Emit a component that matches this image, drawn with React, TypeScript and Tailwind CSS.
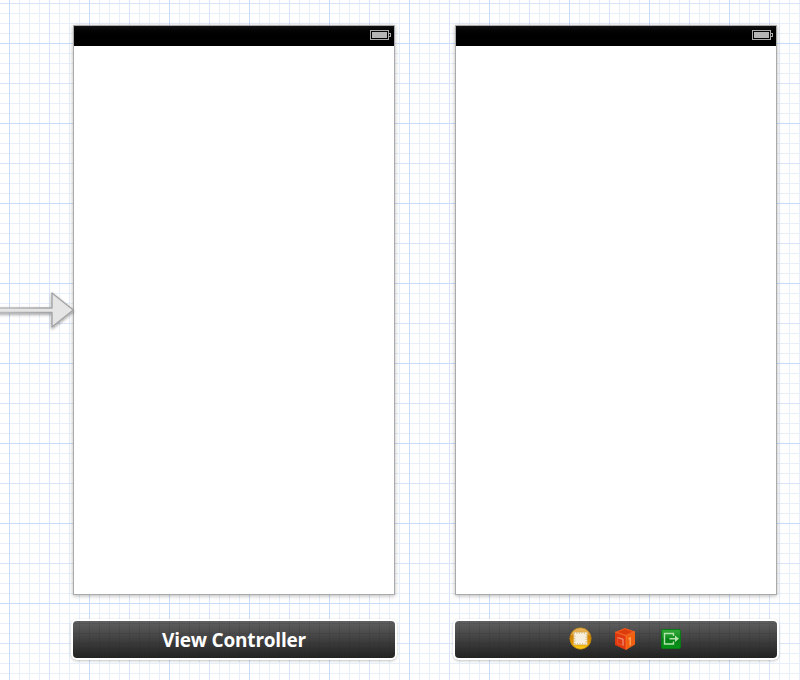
import type { ReactNode } from "react";

function Grid() {
  return (
    <svg className="absolute inset-0" width="800" height="680" shapeRendering="crispEdges" aria-hidden="true">
      <defs>
        <pattern id="grid" x="9" y="43" width="80" height="80" patternUnits="userSpaceOnUse">
          <path d="M10.5 0V80M20.5 0V80M30.5 0V80M50.5 0V80M60.5 0V80M70.5 0V80M0 10.5H80M0 20.5H80M0 30.5H80M0 50.5H80M0 60.5H80M0 70.5H80" stroke="#e7effa" />
          <path d="M40.5 0V80M0 40.5H80" stroke="#d8e5f8" />
          <path d="M.5 0V80M0 .5H80" stroke="#c8dcf8" />
        </pattern>
      </defs>
      <rect width="800" height="680" fill="url(#grid)" />
    </svg>
  );
}

function Battery() {
  return (
    <svg width="21" height="10" viewBox="0 0 21 10" shapeRendering="crispEdges" aria-hidden="true">
      <rect x=".5" y=".5" width="18" height="9" fill="none" stroke="#aaa" />
      <rect x="2" y="2" width="15" height="6" fill="#b5b5b5" />
      <path d="M19 3.5h1.5v3H19" fill="none" stroke="#aaa" />
    </svg>
  );
}

function EntryArrow() {
  return (
    <svg className="absolute left-0 top-[286px]" width="80" height="50" viewBox="0 0 80 50" aria-hidden="true">
      <defs>
        <linearGradient id="fade" gradientUnits="userSpaceOnUse" x1="0" y1="0" x2="52" y2="0">
          <stop offset="0" stopColor="#b9b9b9" />
          <stop offset="1" stopColor="#a3a3a3" />
        </linearGradient>
        <filter id="arrowShadow" x="-10%" y="-20%" width="120%" height="150%">
          <feDropShadow dx="0" dy="1.5" stdDeviation="1.5" floodColor="#000" floodOpacity=".38" />
        </filter>
      </defs>
      <path d="M-3 22H52V7L73.3 24 52 41V26.500H-3Z" fill="#e5e5e5" stroke="url(#fade)" strokeWidth="1.4" strokeLinejoin="round" filter="url(#arrowShadow)" />
    </svg>
  );
}

function ControllerIcon() {
  return (
    <svg width="23" height="23" viewBox="0 0 23 23" aria-hidden="true">
      <defs>
        <linearGradient id="gold" x1="0" y1="0" x2="0" y2="1">
          <stop stopColor="#e6b963" />
          <stop offset=".28" stopColor="#e4a43a" />
          <stop offset=".4" stopColor="#d08200" />
          <stop offset=".7" stopColor="#e09804" />
          <stop offset="1" stopColor="#ffd51a" />
        </linearGradient>
      </defs>
      <circle cx="11.500" cy="11.500" r="10.700" fill="url(#gold)" stroke="#b97b0a" strokeWidth=".7" />
      <rect x="4.500" y="5" width="14" height="13" fill="#dfc48c" />
      <rect x="6.500" y="7" width="10" height="9" fill="#f6efdd" />
      <rect x="6" y="6.500" width="11" height="10" fill="none" stroke="#fffaf0" strokeWidth="1.300" strokeDasharray="1.300 1.200" />
    </svg>
  );
}

function ResponderIcon() {
  return (
    <svg width="20" height="22" viewBox="0 0 20 22" aria-hidden="true">
      <path d="M0 4 10 0l10 3.500L11 8Z" fill="#f5571a" />
      <path d="M2.500 4 10 1.200l7 2.500L11 6.700Z" fill="#dc3d0c" />
      <path d="M0 4 11 8v14L0 17Z" fill="#e0380f" />
      <path d="M20 3.500 11 8v14l9-5.500Z" fill="#f0600f" />
      <path d="M0 4 11 8l9-4.500M11 8v13.500" fill="none" stroke="#ff7430" strokeWidth=".7" />
      <path d="M2.500 9.500 8 11.300v6.500" fill="none" stroke="#ee8f74" strokeWidth="1.300" />
      <path d="M2.500 9.500v5.800L8 17.400" fill="none" stroke="#ea5932" strokeWidth=".8" />
      <path d="m13.500 11 1.700-1v7.500" fill="none" stroke="#ffa765" strokeWidth="1.300" />
    </svg>
  );
}

function ExitIcon() {
  return (
    <svg width="20" height="20" viewBox="0 0 20 20" aria-hidden="true">
      <defs>
        <linearGradient id="green" x1="0" y1="0" x2="0" y2="1">
          <stop stopColor="#32a937" />
          <stop offset=".45" stopColor="#138f22" />
          <stop offset=".5" stopColor="#078016" />
          <stop offset="1" stopColor="#079418" />
        </linearGradient>
      </defs>
      <rect x=".5" y=".5" width="19" height="19" rx="1.500" fill="url(#green)" stroke="#087b16" />
      <path d="M12.500 7V4.500H3.500V15h9v-2.500" fill="none" stroke="#b5e3ac" strokeWidth="1.400" />
      <path d="M8.500 9h5.500V6.500l4 3.300-4 3.300V10.600H8.500Z" fill="#b5e3ac" />
    </svg>
  );
}

function Scene({ children }: { children: ReactNode }) {
  return (
    <section className="flex w-[322px] flex-col gap-[26px]">
      <div className="h-[570px] border border-[#aaa] bg-white shadow-[0_1px_4px_rgba(0,0,0,0.28)]">
        <div className="flex h-5 items-start justify-end bg-linear-to-b from-[#111] to-black to-60% pt-1 pr-[3px]">
          <Battery />
        </div>
      </div>
      <div className="relative flex h-[37px] items-center justify-center rounded-[4px] bg-linear-to-b from-[#606060] to-[#222] shadow-[0_0_0_2px_#fff,0_1px_3px_2px_rgba(0,0,0,0.24)]">
        {children}
      </div>
    </section>
  );
}

function DockGrid({ id, x }: { id: string; x: number }) {
  return (
    <svg className="absolute inset-0 rounded-[4px]" width="322" height="37" shapeRendering="crispEdges" aria-hidden="true">
      <defs>
        <pattern id={id} x={x} y="2" width="10" height="10" patternUnits="userSpaceOnUse">
          <path d="M.5 0V10M0 .5H10" stroke="#18202d" strokeOpacity=".13" />
        </pattern>
      </defs>
      <rect width="322" height="37" fill={`url(#${id})`} />
    </svg>
  );
}

export default function App() {
  return (
    <main className="relative h-[680px] w-[800px] overflow-hidden bg-white">
      <Grid />
      <div className="relative flex gap-[60px] pt-[25px] pl-[73px]">
        <Scene>
          <DockGrid id="dockA" x={6} />
          <span className="relative pt-0.5 font-['Open_Sans','Noto_Sans',sans-serif] text-[19px] leading-[37px] font-bold whitespace-nowrap text-white">
            <span className="block w-[144px] text-center tracking-[-0.2px]">View Controller</span>
          </span>
        </Scene>
        <Scene>
          <DockGrid id="dockB" x={4} />
          <div className="relative flex items-center pb-[2px] pl-[17px]">
            <ControllerIcon />
            <div className="ml-[23px]">
              <ResponderIcon />
            </div>
            <div className="ml-[26px] pt-px">
              <ExitIcon />
            </div>
          </div>
        </Scene>
      </div>
      <EntryArrow />
    </main>
  );
}
